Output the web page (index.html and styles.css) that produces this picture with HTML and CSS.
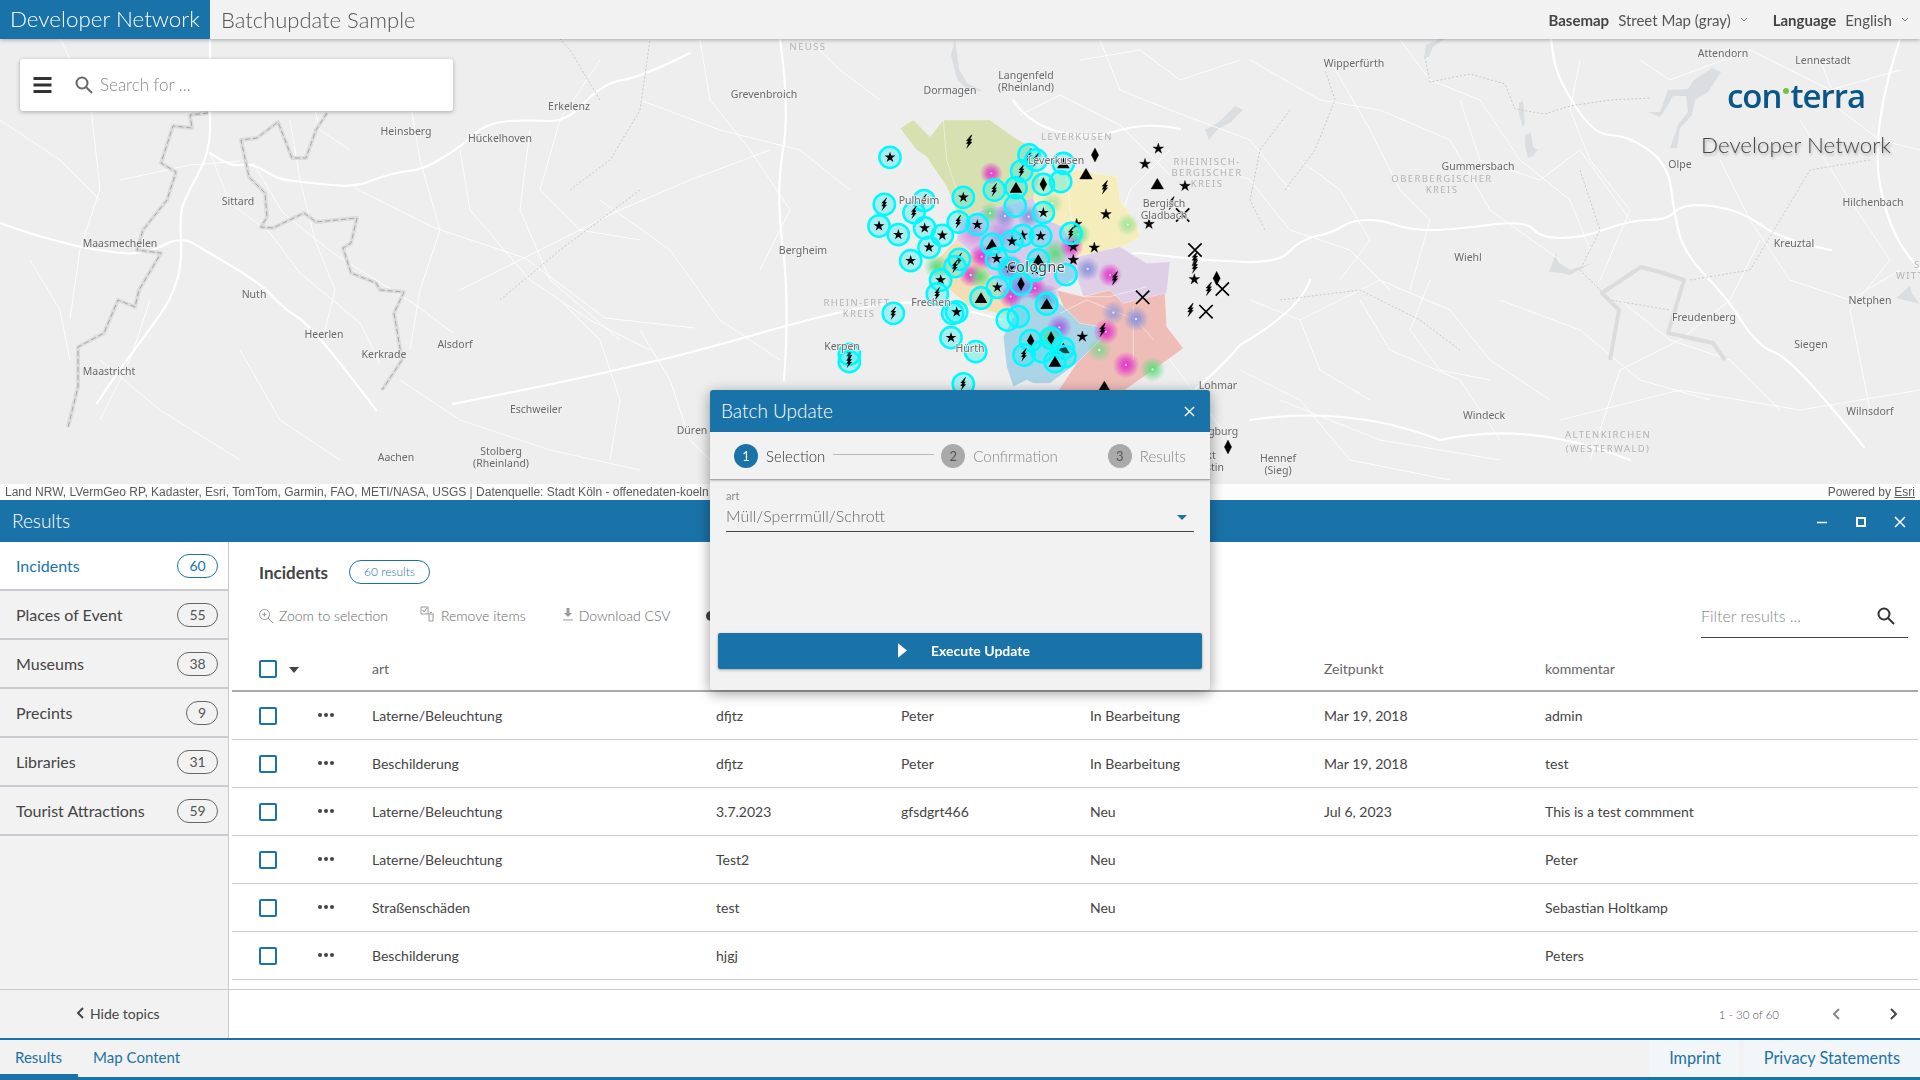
FILE: index.html
```html
<!DOCTYPE html>
<html lang="en">
<head>
  <meta charset="UTF-8" />
  <title>Batchupdate Sample</title>
  <link rel="stylesheet" href="styles.css">
</head>
<body>

  <header class="topbar">
    <div class="brand">Developer Network</div>
    <div class="app-title">Batchupdate Sample</div>
    <div class="switch switch-basemap">
      <b>Basemap</b><span>Street Map (gray)</span>
      <svg class="chev" viewBox="0 0 8 5"><path d="M1 1l3 3 3-3"/></svg>
    </div>
    <div class="switch">
      <b>Language</b><span>English</span>
      <svg class="chev" viewBox="0 0 8 5"><path d="M1 1l3 3 3-3"/></svg>
    </div>
  </header>

  <section class="map">
    <svg class="map-canvas" viewBox="0 39 1920 461" width="1920" height="461">
      <defs>
        <radialGradient id="h-mag"><stop offset="0" stop-color="#f01fd0" stop-opacity=".95"/><stop offset=".45" stop-color="#e030c8" stop-opacity=".65"/><stop offset="1" stop-color="#e030c8" stop-opacity="0"/></radialGradient>
        <radialGradient id="h-blue"><stop offset="0" stop-color="#7f8fe8" stop-opacity=".95"/><stop offset=".45" stop-color="#8a90d8" stop-opacity=".65"/><stop offset="1" stop-color="#8a90d8" stop-opacity="0"/></radialGradient>
        <radialGradient id="h-green"><stop offset="0" stop-color="#50e070" stop-opacity=".95"/><stop offset=".45" stop-color="#60d880" stop-opacity=".6"/><stop offset="1" stop-color="#60d880" stop-opacity="0"/></radialGradient>
        <radialGradient id="h-purple"><stop offset="0" stop-color="#a050f0" stop-opacity=".95"/><stop offset=".45" stop-color="#a060e0" stop-opacity=".65"/><stop offset="1" stop-color="#a060e0" stop-opacity="0"/></radialGradient>

        <polygon id="s-star" points="0,-17 3.8,-5.3 16.2,-5.3 6.2,2 10,13.8 0,6.5 -10,13.8 -6.2,2 -16.2,-5.3 -3.8,-5.3"/>
        <path id="s-bolt" d="M6-20L-9-3h6l-6 9h6L-8 20 8 1H2l6-8H2l6-13z"/>
        <polygon id="s-tri" points="0,-17 19,15 -19,15"/>
        <polygon id="s-dia" points="0,-21 11,0 0,21 -11,0"/>
        <path id="s-x" d="M-20-20L20 20M20-20L-20 20" fill="none" stroke-width="5"/>
        <path id="s-up" d="M-20 12L0-8 20 12" fill="none" stroke-width="5"/>

        <g id="c-ring"><circle r="32" class="ring"/></g>
        <g id="c-star"><use href="#c-ring"/><use href="#s-star" class="in"/></g>
        <g id="c-bolt"><use href="#c-ring"/><use href="#s-bolt" class="in"/></g>
        <g id="c-tri"><use href="#c-ring"/><use href="#s-tri" class="in"/></g>
        <g id="c-dia"><use href="#c-ring"/><use href="#s-dia" class="in"/></g>
        <g id="c-x"><use href="#c-ring"/><use href="#s-x" class="in-line"/></g>
        <g id="c-up"><use href="#c-ring"/><use href="#s-up" class="in-line"/></g>
      </defs>

      <rect x="0" y="39" width="1920" height="461" fill="#eeeeee"/>

      <!-- water -->
      <g class="water">
        <path d="M1721 72L1712 68 1694 80 1688 89 1668 90 1660 112 1648 112 1660 117 1668 105 1673 96 1686 96 1688 112 1678 125 1670 148 1677 148 1680 128 1692 115 1695 100 1708 92z"/>
        <path d="M1549 272L1556 253 1558 262 1570 270 1592 263 1570 275 1562 273z"/>
        <path d="M1525 135l6-2 2 14 5 3-5 6-5 2-3-12zM1519 103l4-2 2 22-2 4-4-12z"/>
        <path d="M1424 57l2-12 14-6 5 0-12 8-4 10z"/>
        <path d="M1896 298l14-12 2 8 8 10-12-3z"/>
        <path d="M955 39l4 30 8 14 16 8-14 0-12-12-6-24z"/>
        <path d="M1205 130l14-8 16-16 8 4-12 12-14 8-8 10z"/>
      </g>

      <!-- thin roads -->
      <g class="road-thin">
        <path d="M60 39l30 60 10 90-20 60-10 70"/><path d="M120 180l70-15 50-4M0 120l60 40 40 40"/>
        <path d="M210 153l20 50 40 30 30 40 60 50 20 40"/><path d="M290 120l10 60 15 60 20 50 -10 40"/>
        <path d="M253 163l30 50 50 40 80 50 40 30"/><path d="M410 100l10 60 20 70-20 60-10 60"/>
        <path d="M460 150l10 60 60 70 60 40 60 30"/><path d="M530 130l-10 80 30 70 70 60"/>
        <path d="M600 60l-40 60-20 70 40 40 60 10"/><path d="M460 290l80-40 80-40 70-30 80-30"/>
        <path d="M355 188l80 40 90 30 80 60 90 10"/><path d="M600 200l70 50 50 70 60 40"/>
        <path d="M700 40l10 60 40 50 40 60-30 60"/><path d="M640 100l80 30 80 20 50 40"/>
        <path d="M1100 40l20 50 50 20 80 30 40 50"/><path d="M1170 150l-40 40-20 60"/>
        <path d="M1250 60l70 40 60 10 70 30 40 70 70 50"/><path d="M1330 60l40 70 30 60 30 30-20 70"/>
        <path d="M1400 40l30 40 50 20 40 60 50 40 20 50"/><path d="M1460 100l20 60 60 20 40-30 50 70"/>
        <path d="M1580 60l-10 50 20 50 40 50-30 70"/><path d="M1640 60l30 20 80-30 80 40 70-20"/>
        <path d="M1720 160l30 60 40 60 60 20 50-30"/><path d="M1760 240l-30 60-50 40-60 30-30 90"/>
        <path d="M1800 120l50 80 40 60-40 50 20 100"/><path d="M1500 300l80 30 60 50 70 20"/>
        <path d="M1300 320l80-40 70 30 40 50 60 40"/><path d="M1240 370l60 30 50 60 100 20"/>
        <path d="M100 360l60 50 80 50M240 350l40 70 60 40"/><path d="M400 380l60 40 90 30 90 20"/>
        <path d="M1100 300l70 60 60 80"/><path d="M1280 400l100 40 120 20"/><path d="M1560 420l120-30 120 20 120-20"/>
        <path d="M1020 115l40-20 60 30 50 50"/><path d="M880 100l-40-30 -30 -30"/>
        <path d="M30 260l30 50 10 50M150 300l-20 60-30 60"/><path d="M330 60l-20 30 10 40 30 20"/>
        <path d="M1200 160l50 20 40 50 60 20 40 40"/><path d="M1360 300l30 50 70 30 40 60"/>
        <path d="M1620 300l50 40 60 20 50 50"/><path d="M1820 60l20 50 40 30 40 10"/>
        <path d="M1080 60l60-10 40 30 60-20"/><path d="M1300 160l40 30 30 50-30 40"/>
        <path d="M1430 280l-20 50 30 40 50 10"/><path d="M640 330l30 50 20 60 40 40"/>
        <path d="M560 300l40 40 20 60-10 60"/><path d="M1250 300l50 20 20 50 50 30"/>
      </g>

      <!-- main roads -->
      <g class="road">
        <path d="M0 223L20 230Q41 237 61 242 82 248 106 251 131 255 143 252 155 250 168 243 182 237 193 243 204 250 218 258 233 267 243 273 253 280 259 284 265 288 275 299 286 310 296 316 306 322 326 346 346 370 376 410"/>
        <path d="M210 39L210 130Q210 153 197 176 184 200 182 208 180 217 181 242 182 267 176 283 171 300 159 316 147 333 132 353 117 373 97 403"/>
        <path d="M210 153Q229 167 241 165 253 163 265 171 278 180 294 181 310 183 332 185 355 188 373 180 392 173 408 171 424 170 442 158 461 147 473 135 486 123 508 121 531 120 549 121 567 122 585 102 604 83 622 80 640 78 690 53"/>
        <path d="M453 404L513 392Q573 380 629 367 686 355 771 330 857 306 895 303 933 300 1003 320"/>
        <path d="M780 39Q790 110 783 150 776 190 782 240 790 300 784 380"/>
        <path d="M1013 100Q1030 125 1060 132 1090 140 1120 130 1150 122 1180 129"/>
        <path d="M1140 253L1175 257Q1210 261 1245 262 1280 263 1290 251 1300 240 1316 236 1333 233 1343 226 1353 220 1367 220 1382 220 1396 225 1411 230 1431 230 1451 230 1488 225 1525 220 1533 229 1541 238 1561 238 1582 238 1606 229 1631 220 1649 220 1668 220 1676 211 1684 203 1712 206 1741 210 1761 225 1781 240 1831 250"/>
        <path d="M1551 39L1554 60Q1558 80 1576 107 1594 135 1610 135 1627 135 1647 149 1668 163 1671 188 1674 213 1679 233 1684 253 1706 276 1729 300 1743 323 1758 347 1776 353 1794 360 1864 447"/>
        <path d="M1000 230Q1060 262 1140 253"/>
        <path d="M1120 500Q1135 440 1170 410 1215 375 1240 345 1300 310 1310 280"/>
        <path d="M1250 420Q1350 405 1440 440 1530 420 1630 460"/>
        <path d="M1900 39Q1870 130 1880 185 1890 240 1920 269"/>
      </g>

      <!-- admin boundaries -->
      <g class="dots">
        <path d="M600 100l-30-50-10-11M570 190l40-30 30-50 10-70"/><path d="M500 300l60-50 40-30 40-30"/>
        <path d="M1425 57l5 25 40-8 35 10 10 25 30 5 25-8 40-6 40-2"/><path d="M1290 110l-30 40 -10 50 15 30"/>
        <path d="M1285 190l30-40 20-50 -10-30"/><path d="M1870 160l-60 10-30 50-30 50-60 10"/><path d="M1280 300l80-10 60 30 40 30"/>
        <path d="M1580 170l20 60-20 40 30 30 60 10"/>
      </g>
      <g class="border">
        <path d="M208 113l-18 2 2 13-19-2-12 37 15 9-9 28-24 30-6 20 24 3-22 37-4 17-17-7-14 33-26 14 0 40-10 40"/>
        <path d="M327 113l-11 17-10 28-14 0-14-36-21 16-16 2 8 37 16 16 2 24-6 10 12 1 31-15 12 9 41-4-6 25-8 5 8 25 25 10 4 7 24 2-10 21 8 47-20 30"/>
        <path d="M1610 360L1619 310 1602 293 1641 267 1660 272 1684 280 1668 333 1713 343 1725 360"/>
      </g>
      <g class="border-dash">
        <path d="M208 113l-18 2 2 13-19-2-12 37 15 9-9 28-24 30-6 20 24 3-22 37-4 17-17-7-14 33-26 14 0 40-10 40"/>
        <path d="M327 113l-11 17-10 28-14 0-14-36-21 16-16 2 8 37 16 16 2 24-6 10 12 1 31-15 12 9 41-4-6 25-8 5 8 25 25 10 4 7 24 2-10 21 8 47-20 30"/>
      </g>

      <g transform="translate(800 100) scale(.33333)">
        <!-- districts -->
        <g class="districts">
          <path fill="#d5dfab" d="M300 85L340 60 390 110 430 60H570L640 110 690 140 720 230 700 300 540 330 480 360 440 260 380 170 350 150z"/>
          <path fill="#f7edb8" d="M800 220L830 210 950 230 960 300 1010 370 1020 410 960 445 830 470 780 380 720 340 700 290 720 230z"/>
          <path fill="#ddcde6" d="M830 470L960 440 1040 490 1110 485 1100 580 970 610 930 570 850 590 830 530z"/>
          <path fill="#efb9b4" d="M770 570L850 590 930 570 970 610 1095 580 1100 680 1150 745 1060 810 960 880H770L830 790 900 720 900 680 840 670 790 620z"/>
          <path fill="#a6d2e6" d="M620 590L740 580 790 620 840 670 900 680 900 720 830 790 750 850 700 850 680 840 640 860 620 800 610 710 640 650z"/>
          <path fill="#f6dcae" d="M470 420L530 470 620 590 640 650 510 620 450 570 440 530 390 500z"/>
          <path fill="#dcc5ea" d="M480 360L540 330 700 295 720 350 790 380 830 470 830 530 770 570 620 590 530 470 470 420z"/>
          <path class="d-road" d="M430 60L440 180 480 300M800 220L810 330 840 470M780 640L860 600 1010 660 1060 720M1000 620V780M850 590L930 590 1040 560"/>
        </g>

        <!-- heat spots -->
        <g>
          <circle cx="574" cy="220" r="34" fill="url(#h-mag)"/><circle cx="570" cy="340" r="32" fill="url(#h-green)"/>
          <circle cx="615" cy="348" r="34" fill="url(#h-blue)"/><circle cx="686" cy="350" r="34" fill="url(#h-blue)"/>
          <circle cx="757" cy="310" r="34" fill="url(#h-green)" opacity=".5"/><circle cx="983" cy="374" r="34" fill="url(#h-green)" opacity=".6"/>
          <circle cx="863" cy="507" r="36" fill="url(#h-blue)"/><circle cx="930" cy="525" r="36" fill="url(#h-mag)"/>
          <circle cx="940" cy="638" r="36" fill="url(#h-blue)" opacity=".8"/><circle cx="1008" cy="657" r="38" fill="url(#h-blue)"/>
          <circle cx="778" cy="682" r="38" fill="url(#h-purple)"/><circle cx="918" cy="695" r="38" fill="url(#h-mag)"/>
          <circle cx="898" cy="750" r="38" fill="url(#h-green)" opacity=".7"/><circle cx="978" cy="795" r="40" fill="url(#h-mag)"/>
          <circle cx="1058" cy="808" r="38" fill="url(#h-green)"/><circle cx="632" cy="590" r="36" fill="url(#h-mag)"/>
          <circle cx="705" cy="565" r="36" fill="url(#h-mag)"/><circle cx="545" cy="470" r="40" fill="url(#h-mag)"/>
          <circle cx="512" cy="525" r="36" fill="url(#h-mag)"/><circle cx="540" cy="530" r="36" fill="url(#h-green)"/>
          <circle cx="765" cy="460" r="44" fill="url(#h-green)"/><circle cx="740" cy="590" r="40" fill="url(#h-blue)"/>
          <circle cx="410" cy="500" r="38" fill="url(#h-green)"/><circle cx="835" cy="403" r="36" fill="url(#h-green)"/>
          <circle cx="815" cy="440" r="36" fill="url(#h-mag)"/><circle cx="660" cy="560" r="42" fill="url(#h-purple)"/>
          <circle cx="605" cy="400" r="50" fill="url(#h-purple)" opacity=".5"/><circle cx="750" cy="712" r="38" fill="url(#h-green)"/>
          <circle cx="630" cy="505" r="44" fill="url(#h-purple)"/><circle cx="520" cy="400" r="44" fill="url(#h-mag)" opacity=".4"/>
        </g>
        <g fill="#fff" opacity=".75">
          <circle cx="574" cy="220" r="3.500"/><circle cx="570" cy="340" r="3.500"/><circle cx="615" cy="348" r="3.500"/><circle cx="686" cy="350" r="3.500"/><circle cx="757" cy="310" r="3.500"/>
          <circle cx="983" cy="374" r="3.500"/><circle cx="863" cy="507" r="3.500"/><circle cx="930" cy="525" r="3.500"/><circle cx="940" cy="638" r="3.500"/><circle cx="1008" cy="657" r="3.500"/>
          <circle cx="778" cy="682" r="3.500"/><circle cx="918" cy="695" r="3.500"/><circle cx="898" cy="750" r="3.500"/><circle cx="978" cy="795" r="3.500"/><circle cx="1058" cy="808" r="3.500"/>
          <circle cx="632" cy="590" r="3.500"/><circle cx="705" cy="565" r="3.500"/><circle cx="545" cy="470" r="3.500"/><circle cx="512" cy="525" r="3.500"/><circle cx="835" cy="403" r="3.500"/>
        </g>

        <!-- black features -->
        <g class="plain">
          <use href="#s-bolt" x="508" y="125"/><use href="#s-dia" x="885" y="165"/><use href="#s-star" x="1075" y="146"/><use href="#s-star" x="1035" y="192"/>
          <use href="#s-tri" x="858" y="222"/><use href="#s-tri" x="1072" y="252"/><use href="#s-star" x="1155" y="258"/><use href="#s-bolt" x="915" y="262"/>
          <use href="#s-star" x="918" y="343"/><use href="#s-star" x="1047" y="372"/><use href="#s-x" x="1148" y="345"/><use href="#s-bolt" x="1115" y="310"/>
          <use href="#s-star" x="830" y="372"/><use href="#s-star" x="820" y="440"/><use href="#s-star" x="883" y="443"/><use href="#s-star" x="820" y="480"/>
          <use href="#s-x" x="1185" y="450"/><use href="#s-bolt" x="1185" y="475"/><use href="#s-bolt" x="1185" y="500"/><use href="#s-star" x="1183" y="538"/>
          <use href="#s-dia" x="1250" y="535"/><use href="#s-bolt" x="1227" y="567"/><use href="#s-x" x="1267" y="567"/><use href="#s-bolt" x="1172" y="630"/>
          <use href="#s-x" x="1218" y="635"/><use href="#s-x" x="1028" y="592"/><use href="#s-bolt" x="945" y="535"/><use href="#s-bolt" x="908" y="690"/>
          <use href="#s-star" x="847" y="710"/><use href="#s-tri" x="913" y="860"/><use href="#s-dia" x="1284" y="1041"/>
        </g>

        <!-- selected features -->
        <g class="selected">
          <use href="#c-star" x="270" y="172"/><use href="#c-bolt" x="253" y="313"/><use href="#c-bolt" x="372" y="302"/><use href="#c-bolt" x="342" y="338"/>
          <use href="#c-star" x="237" y="378"/><use href="#c-star" x="295" y="404"/><use href="#c-star" x="374" y="384"/><use href="#c-star" x="427" y="406"/>
          <use href="#c-star" x="387" y="442"/><use href="#c-star" x="332" y="482"/><use href="#c-star" x="490" y="292"/><use href="#c-bolt" x="583" y="270"/>
          <use href="#c-bolt" x="475" y="366"/><use href="#c-star" x="532" y="374"/><use href="#c-tri" x="648" y="263"/><use href="#c-x" x="646" y="318"/>
          <use href="#c-bolt" x="665" y="213"/><use href="#c-bolt" x="687" y="165"/><use href="#c-bolt" x="708" y="180"/><use href="#c-tri" x="790" y="190"/>
          <use href="#c-dia" x="730" y="253"/><use href="#c-x" x="782" y="245"/><use href="#c-star" x="730" y="338"/><use href="#c-bolt" x="813" y="400"/>
          <use href="#c-star" x="722" y="408"/><use href="#c-star" x="668" y="406"/><use href="#c-star" x="636" y="424"/><use href="#c-tri" x="576" y="433"/>
          <use href="#c-star" x="590" y="476"/><use href="#c-bolt" x="478" y="478"/><use href="#c-bolt" x="465" y="500"/><use href="#c-star" x="422" y="540"/>
          <use href="#c-bolt" x="412" y="582"/><use href="#c-x" x="458" y="640"/><use href="#c-star" x="470" y="636"/><use href="#c-star" x="592" y="562"/>
          <use href="#c-tri" x="543" y="594"/><use href="#c-dia" x="663" y="552"/><use href="#c-star" x="630" y="505"/><use href="#c-star" x="705" y="510"/>
          <use href="#c-tri" x="715" y="480"/><use href="#c-x" x="798" y="524"/><use href="#c-tri" x="740" y="612"/><use href="#c-bolt" x="280" y="640"/>
          <use href="#c-star" x="453" y="713"/><use href="#c-up" x="527" y="755"/><use href="#c-bolt" x="148" y="763"/><use href="#c-bolt" x="148" y="785"/>
          <use href="#c-bolt" x="490" y="852"/><use href="#c-x" x="622" y="660"/><use href="#c-up" x="655" y="650"/><use href="#c-dia" x="692" y="722"/>
          <use href="#c-dia" x="753" y="715"/><use href="#c-bolt" x="672" y="765"/><use href="#c-x" x="726" y="755"/><use href="#c-tri" x="790" y="745"/>
          <use href="#c-x" x="795" y="770"/><use href="#c-tri" x="765" y="785"/>
        </g>
      </g>

      <!-- places -->
      <g class="place">
        <text x="1354" y="67">Wipperfürth</text><text x="1723" y="57">Attendorn</text><text x="1823" y="64">Lennestadt</text>
        <text x="764" y="98">Grevenbroich</text><text x="950" y="94">Dormagen</text><text x="1026" y="79">Langenfeld</text><text x="1026" y="91">(Rheinland)</text>
        <text x="569" y="110">Erkelenz</text><text x="406" y="135">Heinsberg</text><text x="500" y="142">Hückelhoven</text>
        <text x="238" y="205">Sittard</text><text x="120" y="247">Maasmechelen</text><text x="254" y="298">Nuth</text><text x="324" y="338">Heerlen</text>
        <text x="384" y="358">Kerkrade</text><text x="455" y="348">Alsdorf</text><text x="109" y="375">Maastricht</text><text x="536" y="413">Eschweiler</text>
        <text x="692" y="434">Düren</text><text x="501" y="455">Stolberg</text><text x="501" y="467">(Rheinland)</text><text x="396" y="461">Aachen</text>
        <text x="803" y="254">Bergheim</text><text x="919" y="204">Pulheim</text><text x="931" y="306">Frechen</text><text x="842" y="350">Kerpen</text><text x="970" y="352">Hürth</text>
        <text x="1056" y="164">Leverkusen</text><text x="1164" y="207">Bergisch</text><text x="1164" y="219">Gladbach</text><text x="1478" y="170">Gummersbach</text>
        <text x="1468" y="261">Wiehl</text><text x="1680" y="168">Olpe</text><text x="1873" y="206">Hilchenbach</text><text x="1794" y="247">Kreuztal</text>
        <text x="1870" y="304">Netphen</text><text x="1704" y="321">Freudenberg</text><text x="1811" y="348">Siegen</text><text x="1218" y="389">Lohmar</text>
        <text x="1484" y="419">Windeck</text><text x="1278" y="462">Hennef</text><text x="1278" y="474">(Sieg)</text><text x="1870" y="415">Wilnsdorf</text>
        <text x="1216" y="435">Siegburg</text><text x="1202" y="459">Sankt</text><text x="1202" y="471">Augustin</text>
      </g>
      <text class="place-big" x="1036" y="272">Cologne</text>
      <g class="kreis">
        <text x="808" y="50">NEUSS</text><text x="1077" y="140">LEVERKUSEN</text>
        <text x="1207" y="165">RHEINISCH-</text><text x="1207" y="176">BERGISCHER</text><text x="1207" y="187">KREIS</text>
        <text x="1442" y="182">OBERBERGISCHER</text><text x="1442" y="193">KREIS</text>
        <text x="859" y="306">RHEIN-ERFT-</text><text x="859" y="317">KREIS</text>
        <text x="1608" y="438">ALTENKIRCHEN</text><text x="1608" y="452">(WESTERWALD)</text>
        <text class="at-edge" x="1914" y="268">SIEGEN</text><text class="at-edge" x="1896" y="279">WITTGENSTEIN</text>
      </g>
    </svg>

    <div class="search-box">
      <svg class="burger" viewBox="0 0 18 16"><path d="M0 0h18v3H0zM0 6.500h18v3H0zM0 13h18v3H0z"/></svg>
      <svg class="lens" viewBox="0 0 18 18"><circle cx="7" cy="7" r="5.500"/><path d="M11 11l6 6"/></svg>
      <span>Search for ...</span>
    </div>

    <div class="logo">
      <div class="logo-word">con<i></i>terra</div>
      <div class="logo-sub">Developer Network</div>
    </div>

    <div class="attribution">
      <span>Land NRW, LVermGeo RP, Kadaster, Esri, TomTom, Garmin, FAO, METI/NASA, USGS | Datenquelle: Stadt Köln - offenedaten-koeln.de</span>
      <span>Powered by <u>Esri</u></span>
    </div>
  </section>

  <section class="results">
    <div class="titlebar">
      <span>Results</span>
      <div class="win-buttons">
        <svg viewBox="0 0 12 12"><path d="M1 6.500h10"/></svg>
        <svg class="win-max" viewBox="0 0 12 12"><path d="M2 2h8v8H2z"/></svg>
        <svg viewBox="0 0 12 12"><path d="M1 1l10 10M11 1L1 11"/></svg>
      </div>
    </div>

    <div class="results-body">
      <aside class="topics">
        <ul class="topic-list">
          <li class="active">Incidents <span class="badge">60</span></li>
          <li>Places of Event <span class="badge">55</span></li>
          <li>Museums <span class="badge">38</span></li>
          <li>Precints <span class="badge small">9</span></li>
          <li>Libraries <span class="badge">31</span></li>
          <li>Tourist Attractions <span class="badge">59</span></li>
        </ul>
        <div class="hide-topics">
          <svg viewBox="0 0 8 12"><path d="M7 1L2 6l5 5"/></svg>
          Hide topics
        </div>
      </aside>

      <div class="content">
        <div class="content-head">
          <h2>Incidents</h2>
          <span class="count">60 results</span>
        </div>

        <div class="toolbar">
          <a class="tool">
            <svg viewBox="0 0 16 16"><circle cx="6.500" cy="6.500" r="5"/><path d="M10 10l5 5M4.500 6.500h4M6.500 4.500v4"/></svg>
            Zoom to selection
          </a>
          <a class="tool tool-remove">
            <svg viewBox="0 0 16 16"><path d="M1 1h7v7H1zM2.500 4l1.500 2 3-4M8 8h6M9 8.500V15h4V8.500M10 6.500h2"/></svg>
            Remove items
          </a>
          <a class="tool tool-download">
            <svg viewBox="0 0 12 14"><path class="fill" d="M4.500 1h3v5H10L6 10 2 6h2.500z"/><path d="M1 13h10"/></svg>
            Download CSV
          </a>
          <svg class="tool-more" viewBox="0 0 14 14"><circle cx="7" cy="7" r="5"/></svg>
          <div class="filter">
            <span>Filter results ...</span>
            <svg viewBox="0 0 18 18"><circle cx="7" cy="7" r="5.500"/><path d="M11 11l6 6"/></svg>
          </div>
        </div>

        <div class="table-wrap">
          <table>
            <colgroup>
              <col style="width:140px"><col style="width:344px"><col style="width:185px"><col style="width:189px"><col style="width:234px"><col style="width:221px"><col>
            </colgroup>
            <thead>
              <tr>
                <th><div class="row-tools"><i class="check"></i><i class="caret"></i></div></th>
                <th>art</th><th></th><th></th><th></th><th>Zeitpunkt</th><th>kommentar</th>
              </tr>
            </thead>
            <tbody>
              <tr>
                <td><div class="row-tools"><i class="check"></i><i class="dots-menu"></i></div></td>
                <td>Laterne/Beleuchtung</td><td>dfjtz</td><td>Peter</td><td>In Bearbeitung</td><td>Mar 19, 2018</td><td>admin</td>
              </tr>
              <tr>
                <td><div class="row-tools"><i class="check"></i><i class="dots-menu"></i></div></td>
                <td>Beschilderung</td><td>dfjtz</td><td>Peter</td><td>In Bearbeitung</td><td>Mar 19, 2018</td><td>test</td>
              </tr>
              <tr>
                <td><div class="row-tools"><i class="check"></i><i class="dots-menu"></i></div></td>
                <td>Laterne/Beleuchtung</td><td>3.7.2023</td><td>gfsdgrt466</td><td>Neu</td><td>Jul 6, 2023</td><td>This is a test commment</td>
              </tr>
              <tr>
                <td><div class="row-tools"><i class="check"></i><i class="dots-menu"></i></div></td>
                <td>Laterne/Beleuchtung</td><td>Test2</td><td></td><td>Neu</td><td></td><td>Peter</td>
              </tr>
              <tr>
                <td><div class="row-tools"><i class="check"></i><i class="dots-menu"></i></div></td>
                <td>Straßenschäden</td><td>test</td><td></td><td>Neu</td><td></td><td>Sebastian Holtkamp</td>
              </tr>
              <tr>
                <td><div class="row-tools"><i class="check"></i><i class="dots-menu"></i></div></td>
                <td>Beschilderung</td><td>hjgj</td><td></td><td></td><td></td><td>Peters</td>
              </tr>
            </tbody>
          </table>
        </div>

        <div class="pager">
          <span>1 - 30 of 60</span>
          <svg class="prev" viewBox="0 0 8 12"><path d="M7 1L2 6l5 5"/></svg>
          <svg viewBox="0 0 8 12"><path d="M1 1l5 5-5 5"/></svg>
        </div>
      </div>
    </div>
  </section>

  <footer class="footer">
    <a class="foot-tab active">Results</a>
    <a class="foot-tab">Map Content</a>
    <a class="foot-link first">Imprint</a>
    <a class="foot-link">Privacy Statements</a>
  </footer>

  <div class="dialog">
    <div class="dialog-head">
      <span>Batch Update</span>
      <svg viewBox="0 0 12 12"><path d="M1 1l10 10M11 1L1 11"/></svg>
    </div>
    <div class="stepper">
      <div class="step current"><b>1</b>Selection</div>
      <i class="step-line"></i>
      <div class="step"><b>2</b>Confirmation</div>
      <div class="step step-last"><b>3</b>Results</div>
    </div>
    <div class="dialog-body">
      <div class="field">
        <label>art</label>
        <div class="select">Müll/Sperrmüll/Schrott<i></i></div>
      </div>
      <button class="execute">
        <svg viewBox="0 0 10 16"><path d="M0 0l10 8-10 8z"/></svg>
        Execute Update
      </button>
    </div>
  </div>

</body>
</html>
```

FILE: styles.css
```css
* {
  box-sizing: border-box;
}

body {
  margin: 0;
  width: 1920px;
  height: 1080px;
  overflow: hidden;
  display: flex;
  flex-direction: column;
  position: relative;
  font-family: Lato, "Liberation Sans", sans-serif;
  color: #444;
  background-color: #fff;
}

svg {
  display: block;
}

/* top bar */
.topbar {
  height: 39px;
  display: flex;
  align-items: center;
  background-color: #f2f2f2;
  box-shadow: 0 1px 4px rgba(0, 0, 0, .3);
  position: relative;
  z-index: 2;
}

.brand {
  width: 210px;
  height: 39px;
  line-height: 38px;
  padding-left: 10px;
  font-size: 22.400px;
  font-weight: 300;
  color: #fff;
  background-color: #1a73a8;
}

.app-title {
  margin-left: 11px;
  font-size: 22px;
  font-weight: 300;
  color: #555;
  flex: 1;
}

.switch {
  display: flex;
  align-items: center;
  font-size: 15px;
  margin-right: 11px;
}

.switch-basemap {
  margin-right: 25px;
}

.switch b {
  margin-right: 9px;
}

.switch span {
  font-weight: 400;
  color: #555;
}

.chev {
  width: 8px;
  height: 5px;
  margin-left: 9px;
  fill: none;
  stroke: #777;
  stroke-width: 1;
}

/* map */
.map {
  height: 461px;
  position: relative;
  overflow: hidden;
}

.map-canvas {
  position: absolute;
  left: 0;
  top: 0;
}

.water path {
  fill: #dbdee0;
}

.road {
  filter: blur(.4px);
}

.road path {
  fill: none;
  stroke: #fff;
  stroke-width: 2.200;
  stroke-linejoin: round;
  stroke-linecap: round;
}

.road-thin {
  filter: blur(.4px);
}

.road-thin path {
  fill: none;
  stroke: #fff;
  stroke-width: 1;
  stroke-linejoin: round;
  opacity: .85;
}

.dots path {
  fill: none;
  stroke: #c8c8c8;
  stroke-width: 1;
  stroke-dasharray: 2 2;
}

.border path {
  fill: none;
  stroke: #dcdcdc;
  stroke-width: 4;
  stroke-linejoin: round;
}

.border-dash path {
  fill: none;
  stroke: #a8a8a8;
  stroke-width: 1;
  stroke-dasharray: 5 3;
}

.districts > path {
  stroke: rgba(255, 255, 255, .35);
  stroke-width: 2;
  opacity: .92;
}

.districts .d-road {
  fill: none;
  stroke: rgba(255, 255, 255, .5);
  stroke-width: 3;
}

.plain {
  fill: #000;
  stroke: #000;
}

.ring {
  fill: rgba(0, 240, 245, .3);
  stroke: #00f8ff;
  stroke-width: 7.500;
}

.selected .in {
  fill: #0f4650;
  stroke: none;
}

.selected .in-line {
  stroke: #0f4650;
}

.place text {
  font-family: "Noto Sans", sans-serif;
  font-size: 10.500px;
  fill: #686868;
  text-anchor: middle;
  stroke: #f1f1f1;
  stroke-width: 1.500px;
  paint-order: stroke;
}

.place-big {
  font-family: "Noto Sans", sans-serif;
  font-size: 14px;
  fill: #444;
  text-anchor: middle;
  letter-spacing: .5px;
  stroke: rgba(255, 255, 255, .75);
  stroke-width: 2px;
  paint-order: stroke;
}

.kreis text {
  font-family: "Noto Sans", sans-serif;
  font-size: 9.500px;
  letter-spacing: 1.400px;
  fill: #b4b4b4;
  text-anchor: middle;
}

.kreis text.at-edge {
  text-anchor: start;
}

.search-box {
  position: absolute;
  left: 20px;
  top: 20px;
  width: 433px;
  height: 52px;
  display: flex;
  align-items: center;
  padding-left: 13px;
  padding-bottom: 1px;
  background-color: #fff;
  border-radius: 3px;
  box-shadow: 0 1px 4px rgba(0, 0, 0, .3);
  font-size: 17px;
  font-weight: 300;
  color: #8a8a8a;
}

.burger {
  width: 19px;
  height: 16px;
  fill: #333;
}

.lens {
  width: 18px;
  height: 18px;
  margin-left: 23px;
  margin-right: 7px;
  fill: none;
  stroke: #666;
  stroke-width: 2;
}

.logo {
  position: absolute;
  left: 1701px;
  top: 35px;
  width: 190px;
  text-align: center;
}

.logo-word {
  font-family: "Open Sans", sans-serif;
  font-size: 33px;
  font-weight: 600;
  line-height: 44px;
  letter-spacing: -1px;
  color: #0a5688;
}

.logo-word i {
  display: inline-block;
  width: 6px;
  height: 6px;
  margin: 0 1px 0 2px;
  vertical-align: 14px;
  border-radius: 50%;
  background-color: #76c043;
}

.logo-sub {
  margin-top: 12px;
  font-size: 22.400px;
  font-weight: 300;
  line-height: 30px;
  color: #444;
  white-space: nowrap;
  text-shadow: 1px 2px 3px rgba(0, 0, 0, .3);
}

.attribution {
  position: absolute;
  left: 0;
  right: 0;
  bottom: 0;
  height: 16px;
  padding: 0 5px;
  display: flex;
  justify-content: space-between;
  font-family: "Liberation Sans", sans-serif;
  font-size: 12px;
  line-height: 16px;
  color: #5a5a5a;
  background-color: rgba(255, 255, 255, .8);
}

/* results window */
.results {
  height: 538px;
  display: flex;
  flex-direction: column;
}

.titlebar {
  height: 42px;
  flex: none;
  display: flex;
  align-items: center;
  justify-content: space-between;
  padding-left: 12px;
  padding-bottom: 2px;
  font-size: 19px;
  font-weight: 300;
  color: #fff;
  background-color: #1a73a8;
}

.win-buttons {
  display: flex;
  gap: 27px;
  margin-right: 14px;
  margin-top: 4px;
}

.win-buttons svg {
  width: 12px;
  height: 12px;
  fill: none;
  stroke: #fff;
  stroke-width: 1.500;
}

.win-buttons .win-max {
  stroke-width: 2;
}

.results-body {
  flex: 1;
  display: flex;
  min-height: 0;
}

.topics {
  width: 229px;
  flex: none;
  display: flex;
  flex-direction: column;
  background-color: #f2f2f2;
  border-right: 1px solid #ccc;
}

.topic-list {
  flex: 1;
  margin: 0;
  padding: 0;
  list-style: none;
}

.topic-list li {
  height: 49px;
  display: flex;
  align-items: center;
  justify-content: space-between;
  padding: 0 10px 0 16px;
  font-size: 16px;
  color: #444;
  border-bottom: 2px solid #c9ccd0;
}

.topic-list li.active {
  color: #1a73a8;
  background-color: #fff;
}

.badge {
  width: 41px;
  height: 24px;
  line-height: 22px;
  text-align: center;
  font-size: 14px;
  color: #555;
  border: 1px solid #666;
  border-radius: 12px;
}

.badge.small {
  width: 32px;
}

.active .badge {
  color: #1a73a8;
  border-color: #1a73a8;
}

.hide-topics {
  height: 49px;
  flex: none;
  display: flex;
  align-items: center;
  gap: 6px;
  padding: 0 0 2px 76px;
  font-size: 14px;
  border-top: 1px solid #ccc;
}

.hide-topics svg,
.pager svg {
  width: 8px;
  height: 12px;
  fill: none;
  stroke: #444;
  stroke-width: 2;
}

.content {
  flex: 1;
  min-width: 0;
  display: flex;
  flex-direction: column;
  background-color: #fff;
}

.content-head {
  height: 24px;
  margin-top: 18px;
  padding-left: 30px;
  display: flex;
  align-items: center;
  gap: 21px;
  flex: none;
}

.content-head h2 {
  margin: 0;
  font-size: 17px;
  font-weight: 700;
  color: #444;
}

.count {
  width: 81px;
  height: 24px;
  line-height: 22px;
  text-align: center;
  font-size: 12px;
  font-weight: 300;
  color: #1a73a8;
  border: 1px solid #1a73a8;
  border-radius: 12px;
}

.toolbar {
  height: 46px;
  margin-top: 10px;
  padding-left: 29px;
  display: flex;
  align-items: center;
  flex: none;
}

.tool {
  display: flex;
  align-items: center;
  gap: 5px;
  margin-right: 32px;
  margin-bottom: 3px;
  font-size: 14px;
  font-weight: 300;
  color: #666;
  white-space: nowrap;
}

.tool-remove {
  margin-right: 36px;
}

.tool-download {
  margin-right: 34px;
}

.tool svg {
  width: 16px;
  height: 16px;
  fill: none;
  stroke: #999;
  stroke-width: 1;
}

.tool-remove svg {
  margin-top: -4px;
}

.tool-download svg {
  width: 12px;
  height: 14px;
  margin-top: -3px;
}

.tool-download .fill {
  fill: #999;
  stroke: none;
}

.tool-more {
  width: 14px;
  height: 14px;
  margin-bottom: 3px;
  fill: #444;
}

.filter {
  width: 207px;
  height: 44px;
  margin-left: auto;
  margin-right: 12px;
  align-self: flex-start;
  display: flex;
  align-items: center;
  justify-content: space-between;
  padding: 0 13px 0 0;
  font-size: 16px;
  font-weight: 300;
  color: #888;
  border-bottom: 1px solid #444;
}

.filter svg {
  width: 18px;
  height: 18px;
  fill: none;
  stroke: #333;
  stroke-width: 2;
}

.table-wrap {
  flex: 1;
  min-height: 0;
  overflow: hidden;
  padding: 0 2px 0 3px;
}

table {
  width: 100%;
  table-layout: fixed;
  border-collapse: separate;
  border-spacing: 0;
  font-size: 14px;
  color: #444;
}

th {
  height: 52px;
  padding: 7px 0 0;
  text-align: left;
  font-weight: 400;
  color: #666;
  border-bottom: 2px solid #aaa;
}

td {
  height: 48px;
  padding: 0;
  white-space: nowrap;
  border-bottom: 1px solid #ccc;
}

.row-tools {
  display: flex;
  align-items: center;
  padding-left: 27px;
}

.check {
  width: 18px;
  height: 18px;
  border: 2px solid #1a73a8;
  border-radius: 2px;
  background-color: #fff;
}

.caret {
  width: 0;
  height: 0;
  margin-left: 12px;
  margin-top: 3px;
  border-left: 5px solid transparent;
  border-right: 5px solid transparent;
  border-top: 6px solid #444;
}

.dots-menu {
  width: 4px;
  height: 4px;
  margin-left: 41px;
  margin-top: -2px;
  border-radius: 50%;
  background-color: #444;
  box-shadow: 6px 0 0 #444, 12px 0 0 #444;
}

.pager {
  height: 49px;
  flex: none;
  display: flex;
  align-items: center;
  justify-content: flex-end;
  padding-right: 22px;
  font-size: 11.500px;
  font-weight: 300;
  color: #555;
  border-top: 1px solid #ccc;
}

.pager svg.prev {
  margin: 0 50px 0 53px;
  stroke: #888;
}

/* footer */
.footer {
  height: 42px;
  display: flex;
  background-color: #f2f2f2;
  border-top: 2px solid #1a73a8;
  border-bottom: 3px solid #1a73a8;
  font-size: 15px;
  color: #1a73a8;
}

.foot-tab {
  height: 37px;
  line-height: 35px;
  padding: 0 15px;
}

.foot-tab.active {
  padding-right: 16px;
  border-bottom: 3px solid #1a73a8;
}

.foot-link {
  height: 37px;
  line-height: 36px;
  padding: 0 20px;
  margin-left: 5px;
  font-size: 16.300px;
  background-color: #f3f6f8;
}

.foot-link.first {
  margin-left: auto;
  padding-right: 18px;
}

/* dialog */
.dialog {
  position: absolute;
  left: 710px;
  top: 390px;
  width: 500px;
  height: 300px;
  z-index: 5;
  display: flex;
  flex-direction: column;
  border-radius: 3px;
  background-color: #f2f2f2;
  box-shadow: 0 3px 14px rgba(0, 0, 0, .4);
  overflow: hidden;
}

.dialog-head {
  height: 42px;
  flex: none;
  display: flex;
  align-items: center;
  justify-content: space-between;
  padding: 0 15px 2px 11px;
  font-size: 19px;
  font-weight: 300;
  color: #fff;
  background-color: #1a73a8;
}

.dialog-head svg {
  width: 11px;
  height: 11px;
  margin-top: 2px;
  fill: none;
  stroke: #fff;
  stroke-width: 1.500;
}

.stepper {
  height: 48px;
  flex: none;
  display: flex;
  align-items: center;
  padding-left: 24px;
  border-bottom: 1px solid #aaa;
  box-shadow: 0 1px 2px rgba(0, 0, 0, .2);
  font-size: 15px;
  font-weight: 300;
  color: #888;
}

.step {
  display: flex;
  align-items: center;
  gap: 8px;
}

.step b {
  width: 24px;
  height: 24px;
  line-height: 24px;
  text-align: center;
  font-size: 13px;
  font-weight: 400;
  color: #555;
  border-radius: 50%;
  background-color: #aaa;
}

.step.current {
  color: #333;
}

.step.current b {
  color: #fff;
  background-color: #1a73a8;
}

.step-line {
  width: 101px;
  height: 1px;
  margin: 0 7px 2px 8px;
  background-color: #bbb;
}

.step-last {
  margin-left: 50px;
}

.dialog-body {
  flex: 1;
  display: flex;
  flex-direction: column;
  padding: 8px 8px 21px;
}

.field {
  padding: 0 8px;
  flex: 1;
}

.field label {
  display: block;
  font-size: 11px;
  line-height: 15px;
  color: #888;
}

.select {
  height: 29px;
  line-height: 25px;
  font-size: 16px;
  font-weight: 300;
  color: #666;
  border-bottom: 1px solid #444;
  position: relative;
}

.select i {
  position: absolute;
  right: 7px;
  top: 12px;
  border-left: 5px solid transparent;
  border-right: 5px solid transparent;
  border-top: 5px solid #1a73a8;
}

.execute {
  height: 36px;
  display: flex;
  align-items: center;
  justify-content: center;
  gap: 24px;
  border: 0;
  border-radius: 2px;
  padding: 0 0 1px 8px;
  font-family: inherit;
  font-size: 14px;
  font-weight: 700;
  color: #fff;
  background-color: #1a73a8;
  box-shadow: 0 1px 3px rgba(0, 0, 0, .35);
}

.execute svg {
  width: 9px;
  height: 15px;
  fill: #fff;
}
```
